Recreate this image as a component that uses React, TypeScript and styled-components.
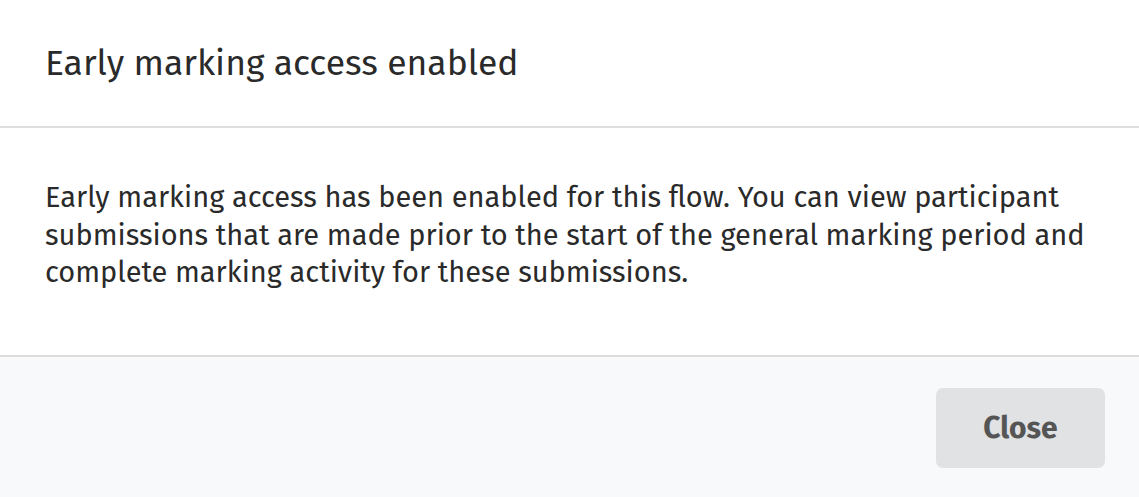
import React from "react";
import styled, { createGlobalStyle } from "styled-components";

const Global = createGlobalStyle`
  html, body { margin: 0; padding: 0; background: #ffffff; }
  body { font-family: "Fira Sans", "Open Sans", "Noto Sans", sans-serif; color: #2b2b2b; }
  * { box-sizing: border-box; }
`;

const Dialog = styled.div`
  width: 1139px;
  height: 497px;
  display: flex;
  flex-direction: column;
  background: #ffffff;
`;

const Header = styled.header`
  height: 128px;
  padding: 0 45px;
  display: flex;
  align-items: center;
  border-bottom: 2px solid #dedede;
`;

const Title = styled.h2`
  margin: 0;
  font-size: 35.5px;
  font-weight: 400;
  color: #2a2a2a;
  letter-spacing: 0;
`;

const Body = styled.div`
  height: 229px;
  padding: 51px 45px 0;
  border-bottom: 2px solid #dcdcdc;
`;

const Text = styled.p`
  margin: 0;
  font-size: 29px;
  line-height: 37.5px;
  color: #2a2a2a;
`;

const Footer = styled.footer`
  flex: 1;
  background: #f8f9fb;
  display: flex;
  justify-content: flex-end;
  align-items: flex-start;
  padding: 31px 34px 0;
`;

const Button = styled.button`
  width: 169px;
  height: 80px;
  border: none;
  border-radius: 7px;
  background: #e1e2e4;
  color: #555555;
  font-family: inherit;
  font-size: 30px;
  font-weight: 700;
  cursor: pointer;
`;

export default function App() {
  return (
    <>
      <Global />
      <Dialog>
        <Header>
          <Title>Early marking access enabled</Title>
        </Header>
        <Body>
          <Text>
            Early marking access has been enabled for this flow. You can view participant
            submissions that are made prior to the start of the general marking period and
            complete marking activity for these submissions.
          </Text>
        </Body>
        <Footer>
          <Button>Close</Button>
        </Footer>
      </Dialog>
    </>
  );
}
